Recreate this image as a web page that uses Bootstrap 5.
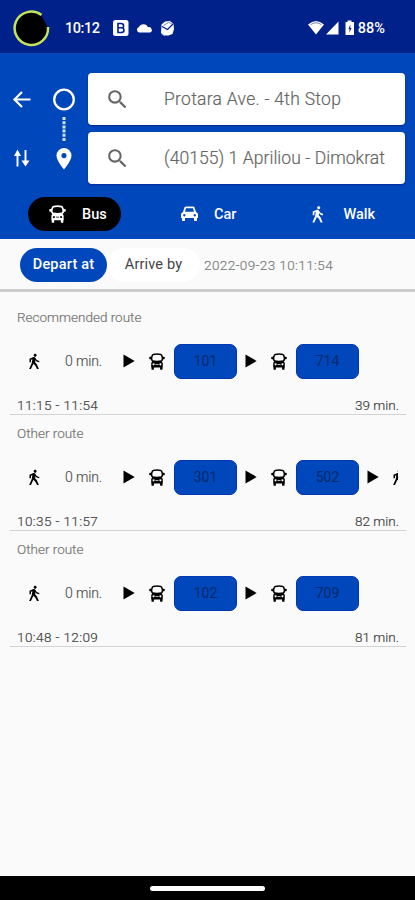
<!DOCTYPE html>
<html lang="en">
<head>
<meta charset="utf-8">
<meta name="viewport" content="width=device-width, initial-scale=1">
<title>Route planner</title>
<link href="https://cdn.jsdelivr.net/npm/bootstrap@5.3.0/dist/css/bootstrap.min.css" rel="stylesheet">
<style>
body{font-family:Roboto,"Liberation Sans",sans-serif;background:#fafafa;height:900px;overflow:hidden;line-height:1}
svg{display:block;flex:none}
.status{height:53px;background:#00208a;padding:3px 30px 0 12px;font-size:15px;font-weight:500}
.status .clock{margin-left:15px;width:34px;font-size:14.5px;letter-spacing:-.45px;padding-top:2px}
.status .charge{margin-left:2px;font-size:14.5px;padding-top:2px}
.status .notices{margin-left:13px}
.planner{height:186px;background:#0047bb;padding-top:20px}
.rail-a{width:44px;padding-left:10px}
.rail-b{width:44px;padding-left:8px}
.rail-top{height:52px}
.rail-bottom{height:66px}
.fields{width:317px;gap:7px}
.field{height:52px;border-radius:4px;padding-left:17px;color:#666;font-size:17.5px;font-weight:300;box-shadow:0 1px 2px #00269a;white-space:nowrap}
.field .query{margin-left:34px;padding-top:2px;-webkit-text-stroke:.2px #666}
.query-from{letter-spacing:.28px}
.query-to{letter-spacing:.06px}
.modes{padding:6px 0 0 28px}
.mode{height:34px;border-radius:17px;font-size:14.5px;font-weight:500;color:#fff}
.mode-bus{background:#000;width:93px;padding-left:21px}
.mode-car{margin-left:60px}
.mode-walk{margin-left:72px}
.mode span{margin-left:16px;padding-top:2px}
.when{height:53px;border-bottom:3px solid #ccc;padding:2px 0 0 20px;font-size:14.5px;white-space:nowrap}
.when-pill{height:34px;border-radius:17px;background:#0047bb;width:87px;font-weight:500;letter-spacing:.2px;padding-top:1px}
.when-alt{height:34px;border-radius:17px;background:#fff;width:93px;color:#444;letter-spacing:.15px;padding-top:1px}
.stamp{color:#777;font-size:13.5px;font-weight:300;-webkit-text-stroke:.15px #777;letter-spacing:.4px;margin-left:4px;padding-top:1px}
.routes{padding-top:7px}
.route{height:116px;margin:0 9px 0 10px;border-bottom:1px solid #d4d4d4;padding:0 7px}
.route-title{height:37px;color:#777;font-size:13.5px;font-weight:300;-webkit-text-stroke:.2px #777}
.legs{height:50px;overflow:hidden;font-size:14px;color:#555;margin-right:1px}
.legs .step-walk{margin-left:8px}
.legs .step-walk:last-child{margin-left:10px}
.legs .step-next{margin-left:8px}
.legs .step-bus{margin-left:14px}
.legs .duration{width:36px;margin:0 20px 0 22px;white-space:nowrap;font-weight:300;-webkit-text-stroke:.2px #555;letter-spacing:-.15px}
.legs .duration+.step-next{margin-left:2px}
.line-no{width:63px;height:35px;flex:none;border-radius:7px;background:#0047bb;color:#062968;border:1px solid #0036b0;margin-left:9px}
.times{height:26px;font-size:13.5px;font-weight:300;color:#444;-webkit-text-stroke:.2px #444}
.times span:first-child{letter-spacing:.4px}
.navbar-sys{height:24px;background:#000}
.handle{width:115px;height:5px;border-radius:3px;background:#fff}
</style>
<script src="https://cdn.jsdelivr.net/npm/bootstrap@5.3.0/dist/js/bootstrap.bundle.min.js"></script>
</head>
<body class="d-flex flex-column">
<svg width="0" height="0" class="position-absolute">
<symbol id="walk" viewBox="0 0 24 24"><path d="M13.5 5.5c1.100 0 2-.9 2-2s-.9-2-2-2-2 .9-2 2 .9 2 2 2zM9.800 8.900 9 14l-3.500 8H8l3.200-7 2.600 2.500L16 22h2.500l-2.700-6.500-2.300-2.500.6-3C14.800 12 16.800 13 19 13v-2c-1.900 0-3.500-1-4.300-2.400l-1-1.600c-.4-.6-1-1-1.700-1-.3 0-.5.1-.8.1L6 8.300V13h2V9.600z"/></symbol>
<symbol id="bus" viewBox="0 0 16 17"><path fill-rule="evenodd" d="M4 .8Q8-.3 12 .8q1.400.5 2 3h.8q1 0 1 .8v1q0 .7-.8.7h-.8q0 1.200-1.400 2.200l1 1.500v4.500h-.3v1.700q0 .5-.5.500h-1.400q-.5 0-.5-.5v-1.700H4.900v1.700q0 .5-.5.500H3q-.5 0-.5-.5v-1.700h-.3V10l1-1.500Q1.800 7.500 1.800 6.300H1q-.8 0-.8-.7v-1q0-.8 1-.8H2q.6-2.500 2-3zM4.300 2.300Q2.700 5 3.800 7.200q4.200.9 8.400 0 1.100-2.200-.5-4.900-3.700-.9-7.400 0zM4.600 10.300a1 1 0 1 0 .01 0zM11.400 10.300a1 1 0 1 0 .01 0zM6.500 11v.8h3V11z"/></symbol>
<symbol id="play" viewBox="0 0 12 14"><path d="M.5.500 11.700 7 .5 13.500z"/></symbol>
<symbol id="search" viewBox="0 0 24 24"><path d="M15.500 14h-.79l-.28-.27A6.470 6.470 0 0 0 16 9.500 6.500 6.500 0 1 0 9.500 16c1.610 0 3.090-.59 4.230-1.570l.27.28v.79l5 4.990L20.490 19zm-6 0A4.500 4.500 0 1 1 14 9.500 4.500 4.500 0 0 1 9.500 14z"/></symbol>
</svg>

<header class="status d-flex align-items-center text-white flex-shrink-0">
<svg width="38" height="38" viewBox="0 0 38 38"><circle cx="19.500" cy="19.500" r="16.500" fill="#000"/><path d="M29.500 6A16.700 16.700 0 1 0 36 18" fill="none" stroke="#c2e35b" stroke-width="2.500"/><path d="M30.500 5.500 37 17.500" stroke="#00208a" stroke-width="3"/></svg>
<span class="clock">10:12</span>
<svg class="notices" width="66" height="18" viewBox="0 0 66 18"><rect x="1" y="1" width="15.500" height="16" rx="2.500" fill="#fff"/><path d="M6 4.500v9h3.500q2.500 0 2.500-2.400 0-1.700-1.600-2.200 1.200-.6 1.200-2 0-2.400-2.500-2.400zM6 8.800h4" fill="none" stroke="#00208a" stroke-width="1.600"/><path d="M27 13.500a2.800 2.800 0 0 1 0-5.400 4.900 4.900 0 0 1 9 .2 2.700 2.700 0 0 1 2 5.200z" fill="#fff"/><path d="M49.500 5.500 53 2.500l5-.5 3.500 3 .5 5-1.500 5-4 1.500h-5L49 14z" fill="#fff"/><path d="M50 7.500l5.500 3L61 5" stroke="#00208a" stroke-width="1.300" fill="none"/><path d="M51.500 6.500l5-3 3 1" stroke="#7183c4" stroke-width="1" fill="none"/></svg>
<svg class="ms-auto" width="48" height="16" viewBox="0 0 48 16"><path d="M0 4.500q8-7 16 0L8 14.500z" fill="#fff"/><path d="M2.500 4.700Q8 .8 13.500 4.700" fill="none" stroke="#6d7fc1"/><path d="M18 14.500 30.500 1.500v13zM39.500.500h4v1.500H46v13h-8.500V2h2z" fill="#fff"/><path d="M42.300 4.500 40.500 9h1v3.500L43.500 8h-1.200z" fill="#00208a"/></svg>
<span class="charge">88%</span>
</header>

<section class="planner flex-shrink-0">
<div class="d-flex">
<div class="rail-a d-flex flex-column"><div class="rail-top d-flex align-items-center"><svg width="24" height="24" viewBox="0 0 24 24"><path d="M20.500 12.500H4.500M12 5l-7.500 7.500L12 20" fill="none" stroke="#fff" stroke-width="2.200"/></svg></div>
<div class="rail-bottom d-flex align-items-center"><svg width="24" height="24" viewBox="0 0 24 24"><path d="M7.500 20.500V6M15.500 4v14" stroke="#fff" stroke-width="1.900"/><path d="M4 10 7.500 3.500 11 10zM11.500 14.500h8l-4 6z" fill="#fff"/></svg></div></div>
<div class="rail-b"><svg width="24" height="112" viewBox="0 0 24 112"><circle cx="12" cy="26.500" r="9.800" fill="none" stroke="#fff" stroke-width="2.300"/><path d="M12 44v24" stroke="#d4e0ff" stroke-width="3" stroke-dasharray="3 1.200"/><path fill-rule="evenodd" fill="#fff" d="M12 75a7.500 7.500 0 0 0-7.500 7.500C4.500 88 12 96.500 12 96.500s7.500-8.500 7.500-14A7.500 7.500 0 0 0 12 75zm0 5a2.600 2.600 0 1 1-.01 0z"/></svg></div>
<div class="fields d-flex flex-column">
<div class="field bg-white d-flex align-items-center"><svg width="25" height="25" fill="#666"><use href="#search"/></svg><span class="query query-from">Protara Ave. - 4th Stop</span></div>
<div class="field bg-white d-flex align-items-center"><svg width="25" height="25" fill="#666"><use href="#search"/></svg><span class="query query-to">(40155) 1 Apriliou - Dimokrat</span></div>
</div></div>
<nav class="modes d-flex">
<div class="mode mode-bus d-flex align-items-center" aria-current="true"><svg width="17" height="18" fill="#fff"><use href="#bus"/></svg><span>Bus</span></div>
<div class="mode mode-car d-flex align-items-center"><svg width="17" height="16" viewBox="0 0 17 16"><path fill="#fff" fill-rule="evenodd" d="M3.500 1.200Q4 .5 5 .5h7q1 0 1.500.7L15 6q2 .6 2 2.500V12h-1v2.300q0 .7-.7.700h-1.600q-.7 0-.7-.7V12H4v2.300q0 .7-.7.700H1.700q-.7 0-.7-.7V12H0V8.500Q0 6.600 2 6zM5 2.300 4 5.800h9l-1-3.500zM3.300 8a1.200 1.200 0 1 0 .01 0zM13.700 8a1.200 1.200 0 1 0 .01 0z"/></svg><span>Car</span></div>
<div class="mode mode-walk d-flex align-items-center"><svg width="19" height="19" fill="#fff"><use href="#walk"/></svg><span>Walk</span></div>
</nav>
</section>

<section class="when d-flex align-items-center flex-shrink-0"><div class="when-pill text-white d-flex align-items-center justify-content-center">Depart at</div><div class="when-alt d-flex align-items-center justify-content-center">Arrive by</div><span class="stamp">2022-09-23 10:11:54</span></section>

<main class="routes flex-grow-1">
<article class="route"><div class="route-title d-flex align-items-center">Recommended route</div>
<div class="legs d-flex align-items-center"><svg class="step-walk" width="18" height="19"><use href="#walk"/></svg><span class="duration">0 min.</span><svg class="step-next" width="12" height="14"><use href="#play"/></svg><svg class="step-bus" width="16" height="17"><use href="#bus"/></svg><span class="line-no d-flex align-items-center justify-content-center">101</span><svg class="step-next" width="12" height="14"><use href="#play"/></svg><svg class="step-bus" width="16" height="17"><use href="#bus"/></svg><span class="line-no d-flex align-items-center justify-content-center">714</span></div>
<div class="times d-flex justify-content-between align-items-end"><span>11:15 - 11:54</span><span>39 min.</span></div></article>
<article class="route"><div class="route-title d-flex align-items-center">Other route</div>
<div class="legs d-flex align-items-center"><svg class="step-walk" width="18" height="19"><use href="#walk"/></svg><span class="duration">0 min.</span><svg class="step-next" width="12" height="14"><use href="#play"/></svg><svg class="step-bus" width="16" height="17"><use href="#bus"/></svg><span class="line-no d-flex align-items-center justify-content-center">301</span><svg class="step-next" width="12" height="14"><use href="#play"/></svg><svg class="step-bus" width="16" height="17"><use href="#bus"/></svg><span class="line-no d-flex align-items-center justify-content-center">502</span><svg class="step-next" width="12" height="14"><use href="#play"/></svg><svg class="step-walk" width="18" height="19"><use href="#walk"/></svg></div>
<div class="times d-flex justify-content-between align-items-end"><span>10:35 - 11:57</span><span>82 min.</span></div></article>
<article class="route"><div class="route-title d-flex align-items-center">Other route</div>
<div class="legs d-flex align-items-center"><svg class="step-walk" width="18" height="19"><use href="#walk"/></svg><span class="duration">0 min.</span><svg class="step-next" width="12" height="14"><use href="#play"/></svg><svg class="step-bus" width="16" height="17"><use href="#bus"/></svg><span class="line-no d-flex align-items-center justify-content-center">102</span><svg class="step-next" width="12" height="14"><use href="#play"/></svg><svg class="step-bus" width="16" height="17"><use href="#bus"/></svg><span class="line-no d-flex align-items-center justify-content-center">709</span></div>
<div class="times d-flex justify-content-between align-items-end"><span>10:48 - 12:09</span><span>81 min.</span></div></article>
</main>
<footer class="navbar-sys flex-shrink-0 d-flex align-items-center justify-content-center"><div class="handle"></div></footer>
</body>
</html>
